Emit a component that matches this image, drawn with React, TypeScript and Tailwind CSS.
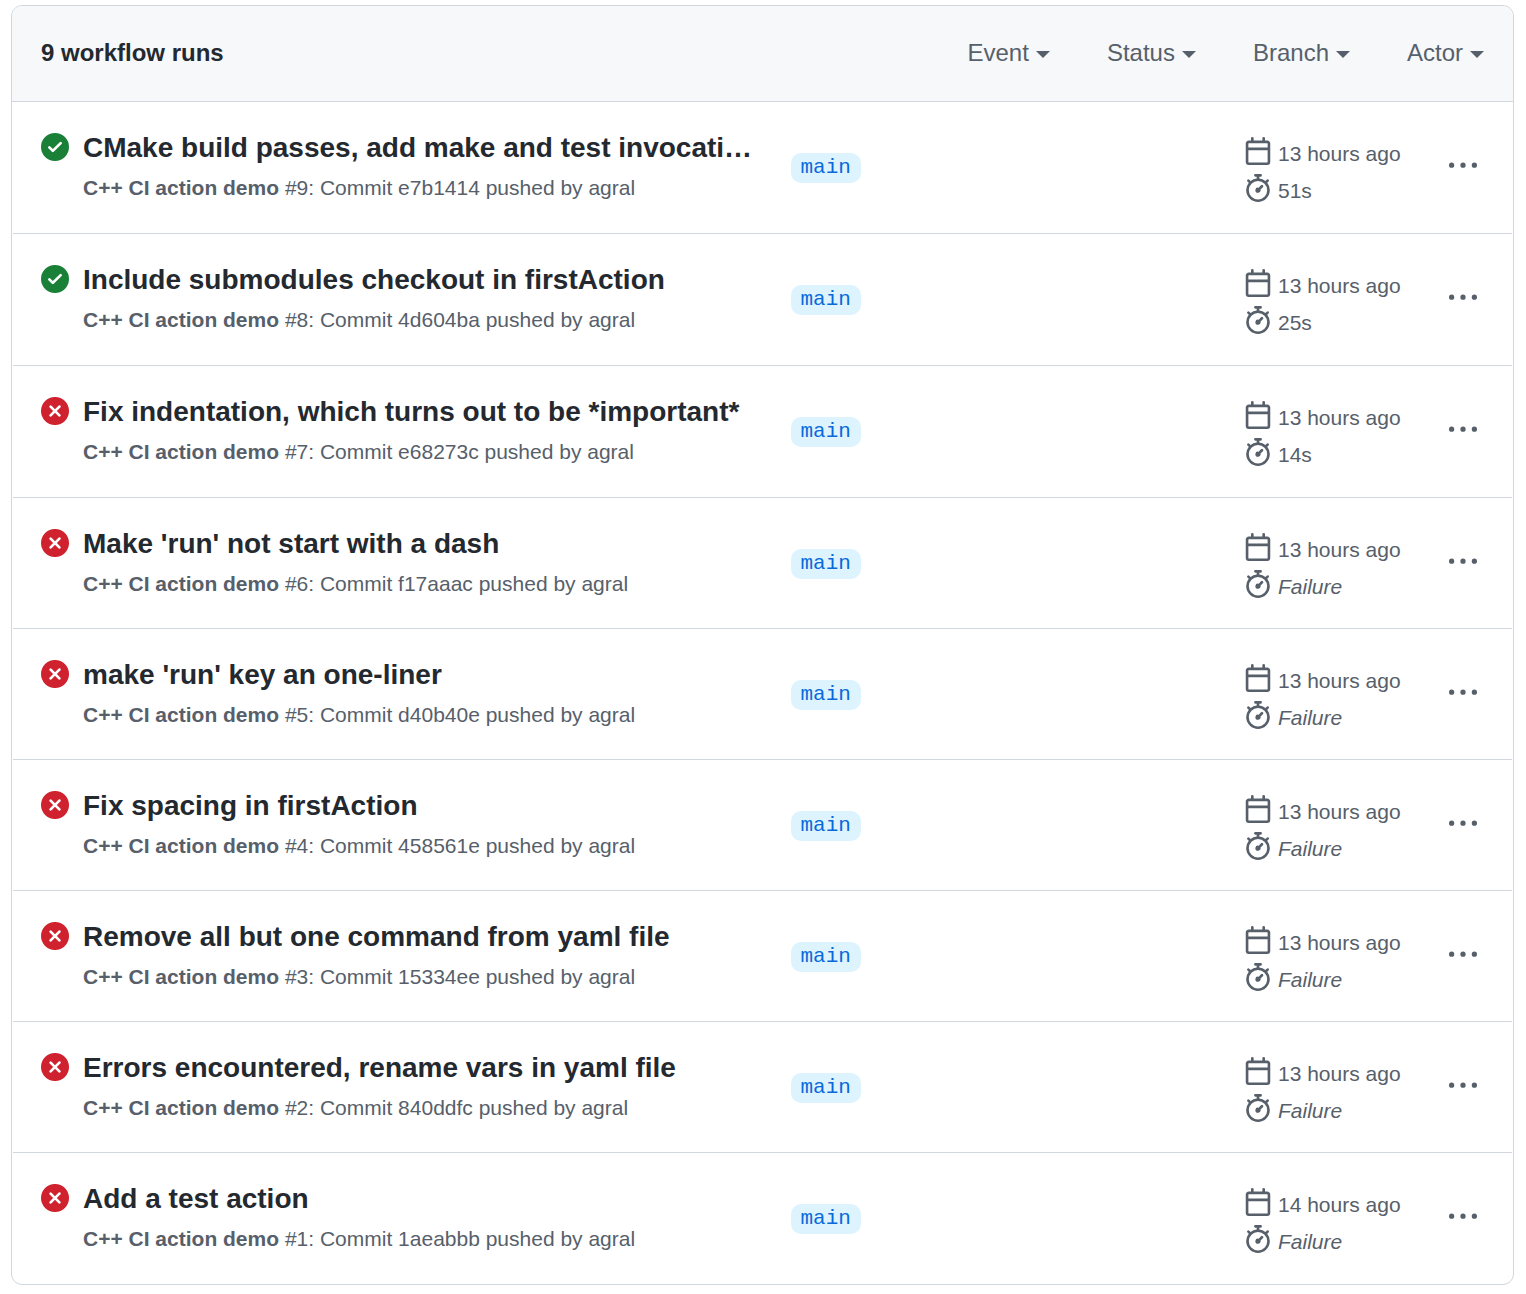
type Run = {
  id: number;
  title: string;
  commit: string;
  when: string;
  duration?: string;
  ok?: boolean;
};

const runs: Run[] = [
  { id: 9, title: "CMake build passes, add make and test invocati…", commit: "e7b1414", when: "13 hours ago", duration: "51s", ok: true },
  { id: 8, title: "Include submodules checkout in firstAction", commit: "4d604ba", when: "13 hours ago", duration: "25s", ok: true },
  { id: 7, title: "Fix indentation, which turns out to be *important*", commit: "e68273c", when: "13 hours ago", duration: "14s" },
  { id: 6, title: "Make 'run' not start with a dash", commit: "f17aaac", when: "13 hours ago" },
  { id: 5, title: "make 'run' key an one-liner", commit: "d40b40e", when: "13 hours ago" },
  { id: 4, title: "Fix spacing in firstAction", commit: "458561e", when: "13 hours ago" },
  { id: 3, title: "Remove all but one command from yaml file", commit: "15334ee", when: "13 hours ago" },
  { id: 2, title: "Errors encountered, rename vars in yaml file", commit: "840ddfc", when: "13 hours ago" },
  { id: 1, title: "Add a test action", commit: "1aeabbb", when: "14 hours ago" },
];

const icons = {
  check:
    "M8 16A8 8 0 1 1 8 0a8 8 0 0 1 0 16Zm3.78-9.72a.751.751 0 0 0-.018-1.042.751.751 0 0 0-1.042-.018L6.75 9.19 5.28 7.72a.751.751 0 0 0-1.042.018.751.751 0 0 0-.018 1.042l2 2a.75.75 0 0 0 1.06 0Z",
  cross:
    "M2.343 13.657A8 8 0 1 1 13.658 2.343 8 8 0 0 1 2.343 13.657ZM6.03 4.97a.751.751 0 0 0-1.042.018.751.751 0 0 0-.018 1.042L6.94 8 4.97 9.97a.749.749 0 0 0 .326 1.275.749.749 0 0 0 .734-.215L8 9.06l1.97 1.97a.749.749 0 0 0 1.275-.326.749.749 0 0 0-.215-.734L9.06 8l1.97-1.97a.749.749 0 0 0-.326-1.275.749.749 0 0 0-.734.215L8 6.94Z",
  calendar:
    "M4.75 0a.75.75 0 0 1 .75.75V2h5V.75a.75.75 0 0 1 1.5 0V2h1.25c.966 0 1.75.784 1.75 1.75v10.5A1.75 1.75 0 0 1 13.25 16H2.75A1.75 1.75 0 0 1 1 14.25V3.75C1 2.784 1.784 2 2.75 2H4V.75A.75.75 0 0 1 4.75 0ZM2.5 7.5v6.75c0 .138.112.25.25.25h10.5a.25.25 0 0 0 .25-.25V7.5Zm10.75-4H2.75a.25.25 0 0 0-.25.25V6h11V3.75a.25.25 0 0 0-.25-.25Z",
  stopwatch:
    "M5.75.75A.75.75 0 0 1 6.5 0h3a.75.75 0 0 1 0 1.5h-.75v1l-.001.041a6.724 6.724 0 0 1 3.464 1.435l.007-.006.75-.75a.749.749 0 0 1 1.275.326.749.749 0 0 1-.215.734l-.75.75-.006.007a6.75 6.75 0 1 1-10.548 0L2.72 5.03l-.75-.75a.751.751 0 0 1 .018-1.042.751.751 0 0 1 1.042-.018l.75.75.007.006A6.72 6.72 0 0 1 7.25 2.541V1.5H6.5a.75.75 0 0 1-.75-.75ZM8 14.5a5.25 5.25 0 1 0-.001-10.501A5.25 5.25 0 0 0 8 14.5Zm.389-6.7 1.33-1.33a.75.75 0 1 1 1.061 1.06L9.45 8.861A1.503 1.503 0 0 1 8 10.75a1.499 1.499 0 1 1 .389-2.95Z",
  kebab:
    "M8 9a1.5 1.5 0 1 0 0-3 1.5 1.5 0 0 0 0 3ZM1.5 9a1.5 1.5 0 1 0 0-3 1.5 1.5 0 0 0 0 3Zm13 0a1.5 1.5 0 1 0 0-3 1.5 1.5 0 0 0 0 3Z",
};

function Icon({ name, className = "" }: { name: keyof typeof icons; className?: string }) {
  return (
    <svg viewBox="0 0 16 16" aria-hidden="true" className={`size-7 shrink-0 fill-current ${className}`}>
      <path d={icons[name]} />
    </svg>
  );
}

function FilterButton({ label }: { label: string }) {
  return (
    <button type="button" className="flex items-center gap-[7px] text-[#57606a]">
      {label}
      <span className="mt-1 border-x-7 border-t-7 border-x-transparent border-t-current" />
    </button>
  );
}

function RunRow({ run }: { run: Run }) {
  return (
    <li
      className={`mx-px flex border-b border-[#d0d7de] px-7 pt-7 last:border-b-0 last:pb-7 ${run.duration ? "pb-7" : "pb-[27px]"}`}
    >
      <div className="flex w-1/2 min-w-0 gap-3.5">
        <Icon name={run.ok ? "check" : "cross"} className={`mt-[3px] ${run.ok ? "text-[#1a7f37]" : "text-[#cf222e]"}`} />
        <div className="min-w-0 flex-1">
          <a href={`#run-${run.id}`} className="block truncate text-[28px] leading-[35px] font-bold text-[#24292f]">
            {run.title}
          </a>
          <p className="mt-[7px] truncate text-[21px] leading-[31px]">
            <b>C++ CI action demo</b> #{run.id}: Commit {run.commit} pushed by agral
          </p>
        </div>
      </div>
      <div className="flex w-1/2 pl-7">
        <div className="flex-1 pt-[23px]">
          <a
            href="#main"
            className="inline-block rounded-[10px] bg-[#ddf4ff] px-2.5 font-['Liberation_Mono',monospace] text-[21px] leading-[30px] text-[#0969da]"
          >
            main
          </a>
        </div>
        <div className="flex w-[205px] flex-col gap-1.5 pt-[7px] text-[21px] leading-7">
          <div className="flex gap-1.5">
            <Icon name="calendar" />
            <span className="pt-[3px]">{run.when}</span>
          </div>
          <div className="flex gap-1.5">
            <Icon name="stopwatch" />
            <span className="pt-[3px]">{run.duration ?? <i>Failure</i>}</span>
          </div>
        </div>
        <div className="w-[35px] pt-[22px]">
          <button type="button" aria-label="Show options" className="block">
            <Icon name="kebab" />
          </button>
        </div>
      </div>
    </li>
  );
}

export default function App() {
  return (
    <main className="bg-white pt-[5px] pr-3 pb-[9px] pl-[11px] font-['Liberation_Sans',Arial,sans-serif] text-[#57606a]">
      <section className="overflow-hidden rounded-[11px] border border-[#d0d7de]">
        <header className="flex items-center justify-between border-b border-[#d0d7de] bg-[#f6f8fa] px-[29px] pt-[31px] pb-[33px] text-[24px] leading-[31px]">
          <h1 className="font-bold text-[#24292f]">9 workflow runs</h1>
          <div className="flex gap-[57px]">
            <FilterButton label="Event" />
            <FilterButton label="Status" />
            <FilterButton label="Branch" />
            <FilterButton label="Actor" />
          </div>
        </header>
        <ul>
          {runs.map((run) => (
            <RunRow key={run.id} run={run} />
          ))}
        </ul>
      </section>
    </main>
  );
}
